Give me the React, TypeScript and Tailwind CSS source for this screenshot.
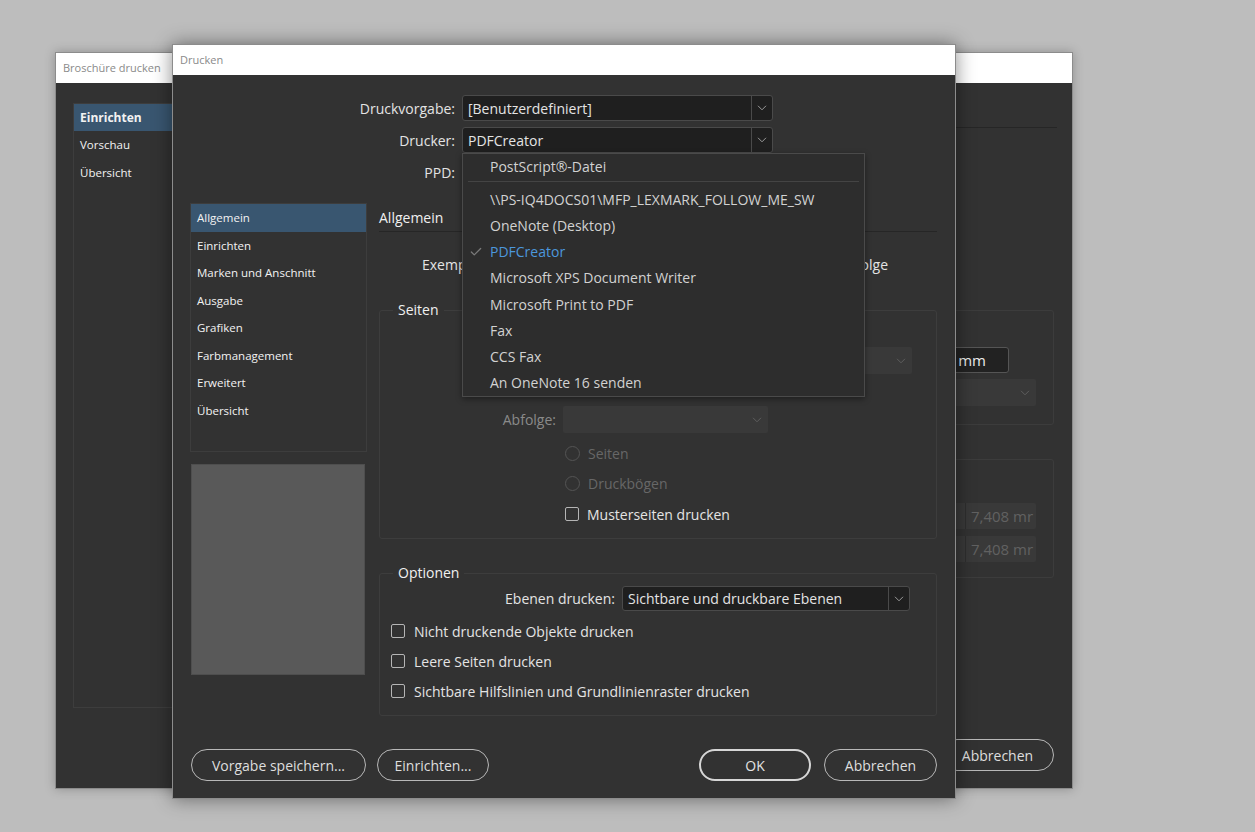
import React from 'react';
import { Check } from 'lucide-react';

const Chevron = ({ className = '' }: { className?: string }) => (
    <svg width="10" height="6" viewBox="0 0 10 6" className={className} fill="none">
        <path d="M1 0.8 L5 4.8 L9 0.8" stroke="currentColor" strokeWidth="1" />
    </svg>
);

const Select = ({ value, className = '' }: { value: string; className?: string }) => (
    <div className={`flex items-center bg-[#1f1f1f] border border-[#4a4a4a] rounded-[3px] ${className}`}>
        <div className="flex-1 pl-[5px] text-[14px] text-[#e4e4e4] truncate">{value}</div>
        <div className="w-[21px] h-full border-l border-[#4a4a4a] flex items-center justify-center text-[#9a9a9a]">
            <Chevron />
        </div>
    </div>
);

const DisabledSelect = ({ className = '' }: { className?: string }) => (
    <div className={`flex items-center justify-end pr-[6px] bg-[#393939] rounded-[2px] text-[#5e5e5e] ${className}`}>
        <Chevron />
    </div>
);

const Box = () => <div className="w-[14px] h-[14px] border border-[#b5b5b5] rounded-[2px] shrink-0" />;

const Radio = () => <div className="w-[15px] h-[15px] rounded-full border border-[#545454] shrink-0" />;

const Pill = ({ label, className = '' }: { label: string; className?: string }) => (
    <button className={`h-[32px] rounded-full border border-[#b8b8b8] text-[14px] text-[#dedede] flex items-center justify-center ${className}`}>
        {label}
    </button>
);

const printers = [
    '\\\\PS-IQ4DOCS01\\MFP_LEXMARK_FOLLOW_ME_SW',
    'OneNote (Desktop)',
    'PDFCreator',
    'Microsoft XPS Document Writer',
    'Microsoft Print to PDF',
    'Fax',
    'CCS Fax',
    'An OneNote 16 senden',
];

const sections = ['Allgemein', 'Einrichten', 'Marken und Anschnitt', 'Ausgabe', 'Grafiken', 'Farbmanagement', 'Erweitert', 'Übersicht'];

const BackDialog = () => (
    <div className="absolute left-[55px] top-[52px] w-[1018px] h-[737px] flex flex-col border border-[#8c8c8c] shadow-[0_0_10px_rgba(0,0,0,0.25)]">
        <div className="h-[30px] bg-white flex items-center pl-[7px] text-[11px] text-[#8a8a8a]">Broschüre drucken</div>
        <div className="flex-1 bg-[#323232] flex pl-[17px] pr-[18px] pt-[20px]">
            <div className="w-[200px] h-[605px] border border-[#3d3d3d] flex flex-col text-[11.5px] text-[#f2f2f2]">
                <div className="h-[27px] bg-[#395670] flex items-center pl-[6px] font-bold text-[12px]">Einrichten</div>
                <div className="h-[27.5px] flex items-center pl-[6px]">Vorschau</div>
                <div className="h-[27.5px] flex items-center pl-[6px]">Übersicht</div>
            </div>
            <div className="flex-1 flex flex-col ml-[20px]">
                <div className="h-[25px] border-b border-[#262626] -mr-[3px]" />
                <div className="mt-[182px] h-[115px] border border-[#3c3c3c] rounded-[3px] flex flex-col items-end pr-[17px]">
                    <div className="mt-[36px] mr-[27px] w-[120px] h-[26px] bg-[#222] border border-[#555] rounded-[3px] flex items-center justify-end pr-[22px] text-[15px] text-[#ececec]">
                        mm
                    </div>
                    <DisabledSelect className="mt-[6px] w-[200px] h-[27px]" />
                </div>
                <div className="mt-[34px] h-[119px] border border-[#3c3c3c] rounded-[3px] flex flex-col items-end pr-[17px] pt-[43px] gap-[7px]">
                    {[0, 1].map((i) => (
                        <div key={i} className="w-[160px] h-[26px] bg-[#393939] rounded-[2px] flex items-center">
                            <div className="w-[90px] h-full border-r border-[#2e2e2e]" />
                            <div className="w-[70px] overflow-hidden whitespace-nowrap pl-[5px] text-[15px] text-[#616161]">7,408 mr</div>
                        </div>
                    ))}
                </div>
                <div className="mt-auto mb-[17px] flex justify-end">
                    <Pill label="Abbrechen" className="w-[113px] h-[31px]" />
                </div>
            </div>
        </div>
    </div>
);

const PrinterMenu = () => (
    <div className="absolute left-[289px] top-[78px] w-[403px] h-[244px] bg-[#2d2d2d] border border-[#4a4a4a] shadow-[0_2px_6px_rgba(0,0,0,0.4)] flex flex-col text-[14px] text-[#d2d2d2]">
        <div className="h-[26px] flex items-center pl-[27px]">PostScript®-Datei</div>
        <div className="h-px bg-[#444] mx-[5px] mt-[1px] mb-[4px]" />
        {printers.map((p) => (
            <div key={p} className="h-[26.3px] flex items-center relative pl-[27px]">
                {p === 'PDFCreator' && <Check size={14} strokeWidth={2.2} className="absolute left-[6px] text-[#7a7a7a]" />}
                <span className={p === 'PDFCreator' ? 'text-[#4c97dc]' : ''}>{p}</span>
            </div>
        ))}
    </div>
);

const FrontDialog = () => (
    <div className="absolute left-[172px] top-[44px] w-[784px] h-[755px] flex flex-col border border-[#8c8c8c] shadow-[0_0_18px_rgba(0,0,0,0.45)]">
        <div className="h-[30px] bg-white flex items-center pl-[7px] text-[11px] text-[#8a8a8a]">Drucken</div>
        <div className="flex-1 bg-[#323232] flex flex-col relative text-[14px] text-[#e4e4e4]">
            <div className="pt-[20px] flex flex-col gap-[6px]">
                <div className="flex items-center h-[26px]">
                    <div className="w-[282px] text-right">Druckvorgabe:</div>
                    <Select value="[Benutzerdefiniert]" className="ml-[7px] w-[311px] h-[26px]" />
                </div>
                <div className="flex items-center h-[26px]">
                    <div className="w-[282px] text-right">Drucker:</div>
                    <Select value="PDFCreator" className="ml-[7px] w-[311px] h-[26px]" />
                </div>
                <div className="flex items-center h-[26px]">
                    <div className="w-[282px] text-right">PPD:</div>
                    <Select value="" className="ml-[7px] w-[311px] h-[26px]" />
                </div>
            </div>

            <div className="flex mt-[18px] pl-[17px] pr-[18px] gap-[12px]">
                <div className="w-[177px] flex flex-col">
                    <div className="h-[249px] border border-[#3d3d3d] flex flex-col text-[11.5px] text-[#f2f2f2]">
                        {sections.map((s, i) => (
                            <div key={s} className={`h-[27.5px] shrink-0 flex items-center pl-[6px] ${i === 0 ? 'bg-[#395670]' : ''}`}>{s}</div>
                        ))}
                    </div>
                    <div className="mt-[12px] ml-[1px] w-[174px] h-[211px] bg-[#595959] border border-[#4e4e4e]" />
                </div>

                <div className="flex-1 flex flex-col">
                    <div className="h-[29px] border-b border-[#262626] flex items-center text-[#f0f0f0]">Allgemein</div>
                    <div className="mt-[18px] h-[28px] flex items-center pl-[43px] pr-[49px]">
                        <span>Exemplare:</span>
                        <div className="flex-1" />
                        <span>Umgekehrte Reihenfolge</span>
                    </div>

                    <fieldset className="mt-[22px] border border-[#3d3d3d] rounded-[3px] pt-[27px] pb-[14px]">
                        <legend className="ml-[13px] px-[5px] leading-[20px] text-[#f0f0f0]">Seiten</legend>
                        <div className="flex items-center h-[27px] pl-[185px]">
                            <Radio />
                            <DisabledSelect className="ml-[120px] flex-1 mr-[24px] h-[27px]" />
                        </div>
                        <div className="flex items-center h-[27px] mt-[32px]">
                            <div className="w-[176px] text-right text-[#8a8a8a]">Abfolge:</div>
                            <DisabledSelect className="ml-[7px] w-[205px] h-[27px]" />
                        </div>
                        <div className="flex items-center h-[20px] mt-[10px] pl-[185px] text-[#676767]">
                            <Radio />
                            <span className="ml-[8px]">Seiten</span>
                        </div>
                        <div className="flex items-center h-[20px] mt-[10px] pl-[185px] text-[#676767]">
                            <Radio />
                            <span className="ml-[8px]">Druckbögen</span>
                        </div>
                        <div className="flex items-center h-[20px] mt-[11px] pl-[185px]">
                            <Box />
                            <span className="ml-[8px]">Musterseiten drucken</span>
                        </div>
                    </fieldset>

                    <fieldset className="mt-[24px] border border-[#3d3d3d] rounded-[3px] pt-[3px] pb-[14px]">
                        <legend className="ml-[13px] px-[5px] leading-[20px] text-[#f0f0f0]">Optionen</legend>
                        <div className="flex items-center h-[25px]">
                            <div className="w-[235px] text-right">Ebenen drucken:</div>
                            <Select value="Sichtbare und druckbare Ebenen" className="ml-[7px] w-[288px] h-[25px]" />
                        </div>
                        {['Nicht druckende Objekte drucken', 'Leere Seiten drucken', 'Sichtbare Hilfslinien und Grundlinienraster drucken'].map((t) => (
                            <div key={t} className="flex items-center h-[20px] mt-[10px] pl-[11px]">
                                <Box />
                                <span className="ml-[9px]">{t}</span>
                            </div>
                        ))}
                    </fieldset>
                </div>
            </div>

            <div className="mt-auto pb-[17px] pl-[18px] pr-[18px] flex items-center">
                <Pill label="Vorgabe speichern..." className="w-[175px]" />
                <Pill label="Einrichten..." className="ml-[11px] w-[112px]" />
                <div className="flex-1" />
                <button className="w-[112px] h-[32px] rounded-full border-2 border-[#d6d6d6] text-[14px] text-[#e4e4e4]">OK</button>
                <Pill label="Abbrechen" className="ml-[13px] w-[113px]" />
            </div>

            <PrinterMenu />
        </div>
    </div>
);

export default function App() {
    return (
        <div className="relative w-[1255px] h-[832px] bg-[#bdbdbd] overflow-hidden font-['Open_Sans',sans-serif]">
            <BackDialog />
            <FrontDialog />
        </div>
    );
}
